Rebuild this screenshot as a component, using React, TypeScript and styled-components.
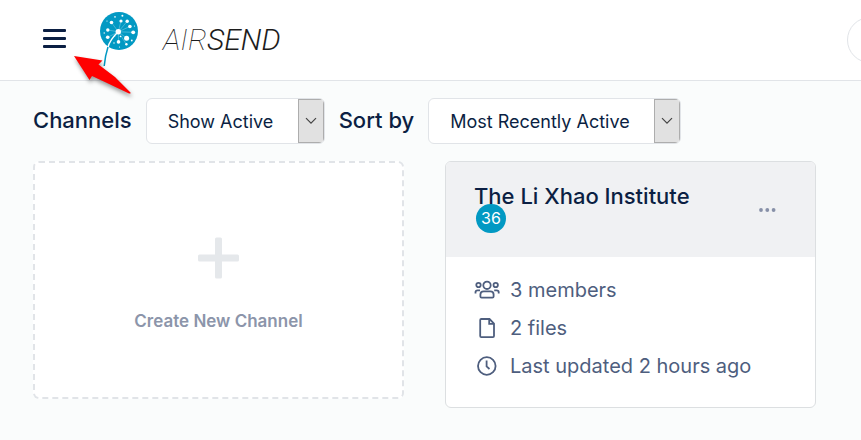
import React from "react";
import styled, { createGlobalStyle } from "styled-components";

const navy = "#0b1f43";
const slate = "#4e5e7e";
const line = "#e1e4e8";
const teal = "#0299c3";

const GlobalStyle = createGlobalStyle`
  * { box-sizing: border-box; }
  body {
    margin: 0;
    background: #fafcfc;
    color: ${navy};
    font-family: Inter, "Liberation Sans", sans-serif;
    overflow-x: hidden;
  }
  button, select { font: inherit; color: inherit; }
`;

const Header = styled.header`
  position: relative;
  display: flex;
  align-items: center;
  height: 81px;
  padding: 0 0 0 40px;
  background: #fff;
  border-bottom: 1px solid ${line};
`;

const MenuButton = styled.button`
  display: flex;
  padding: 0;
  border: 0;
  background: none;
  cursor: pointer;
`;

const Brand = styled.a`
  display: flex;
  align-items: center;
  gap: 23px;
  margin-left: 30px;
  color: #1c1c1c;
  text-decoration: none;
`;

const Wordmark = styled.span<{ $weight: number }>`
  font-family: Roboto, "Liberation Sans", sans-serif;
  font-size: 30px;
  line-height: 36px;
  font-style: italic;
  font-weight: ${(p) => p.$weight};
`;

const Avatar = styled.button`
  flex: none;
  width: 46px;
  height: 46px;
  margin: 0 -32px 0 auto;
  border: 1px solid ${line};
  border-radius: 50%;
  background: #fff;
`;

const Pointer = styled.svg`
  position: absolute;
  top: 50px;
  left: 68px;
  z-index: 1;
  overflow: visible;
  pointer-events: none;
  filter: drop-shadow(1px 3px 2px rgba(0, 0, 0, 0.4));
`;

const Main = styled.main`
  padding: 17px 45px 32px 33px;
`;

const Filters = styled.form`
  display: flex;
  align-items: center;
  gap: 14px;
`;

const FilterLabel = styled.label`
  padding-bottom: 2px;
  font-size: 22px;
  line-height: 28px;
  font-weight: 500;
  white-space: nowrap;
`;

const SelectBox = styled.div`
  display: flex;
  height: 46px;
  border: 1px solid ${line};
  border-radius: 6px;
  background: #fff;
  overflow: hidden;
`;

const Select = styled.select`
  appearance: none;
  border: 0;
  outline: 0;
  margin: 0 -26px 0 0;
  padding: 0 50px 0 21px;
  background: none;
  font-size: 18px;
  z-index: 1;
`;

const SelectArrow = styled.span`
  display: flex;
  align-items: center;
  justify-content: center;
  width: 26px;
  border: 1px solid #adadad;
  background: #e1e1e1;
`;

const Cards = styled.section`
  display: grid;
  grid-template-columns: repeat(2, 1fr);
  align-items: start;
  gap: 41px;
  margin-top: 17px;
`;

const CreateCard = styled.button`
  display: flex;
  flex-direction: column;
  align-items: center;
  gap: 30px;
  padding: 74px 20px 64px;
  border: 2px dashed ${line};
  border-radius: 6px;
  background: #fff;
  color: #8c95aa;
  font-size: 17px;
  line-height: 24px;
  font-weight: 600;
  cursor: pointer;
`;

const Card = styled.article`
  border: 1px solid #dcdfe1;
  border-radius: 6px;
  background: #fff;
  overflow: hidden;
`;

const CardHead = styled.div`
  display: flex;
  align-items: center;
  justify-content: space-between;
  height: 95px;
  padding: 0 37px 0 28px;
  background: #f0f1f3;
`;

const TitleBlock = styled.div`
  position: relative;
  height: 56px;
`;

const Title = styled.h2`
  margin: 0;
  font-size: 22px;
  line-height: 28px;
  font-weight: 500;
`;

const Badge = styled.span`
  position: absolute;
  top: 22px;
  left: 2px;
  width: 30px;
  border-radius: 15px;
  background: ${teal};
  color: #fff;
  font-size: 16px;
  line-height: 29px;
  text-align: center;
`;

const MoreButton = styled.button`
  display: flex;
  padding: 8px 2px;
  border: 0;
  background: none;
  cursor: pointer;
`;

const Facts = styled.ul`
  display: flex;
  flex-direction: column;
  gap: 10px;
  margin: 0;
  padding: 19px 28px 27px;
  list-style: none;
`;

const Fact = styled.li`
  display: flex;
  align-items: center;
  gap: 10px;
  color: ${slate};
  font-size: 20px;
  line-height: 28px;
`;

const MenuIcon = () => (
  <svg width="30" height="24" viewBox="0 0 30 24" fill={navy} aria-hidden="true">
    <rect x="3" y="1" width="23" height="3" rx="1" />
    <rect x="3" y="9" width="23" height="3" rx="1" />
    <rect x="3" y="17" width="23" height="3" rx="1" />
  </svg>
);

const seeds = [
  [11.5, 10.5, 1.8], [21, 9, 1.6], [27.2, 9.3, 1.7], [29.9, 14.5, 1.8],
  [33.2, 20.3, 1.9], [26.6, 26.2, 2.5], [18.5, 29.9, 1.8], [7.7, 25.3, 1.8],
  [7.8, 18, 1.7], [26.4, 32.3, 1.2], [15, 4.9, 0.8], [22.4, 3.8, 1],
  [4.2, 21, 0.7], [14, 31, 0.7], [34.5, 14, 0.6], [20.5, 24.5, 0.8],
  [31.8, 28.5, 0.9], [7, 9, 0.6], [14.8, 24, 0.5], [19.5, 35, 0.6],
];

const Dandelion = () => (
  <svg width="40" height="56" viewBox="0 0 40 56" aria-hidden="true">
    <circle cx="19" cy="19" r="19" fill={teal} />
    <g stroke="#fff" strokeOpacity="0.45" strokeWidth="0.6">
      {seeds.slice(0, 10).map(([x, y]) => (
        <path key={`${x}-${y}`} d={`M18.3 19.8L${x} ${y}`} />
      ))}
    </g>
    <g fill="#fff">
      {seeds.map(([x, y, r]) => <circle key={`${x}-${y}`} cx={x} cy={y} r={r} />)}
      <circle cx="18.3" cy="19.8" r="2.7" />
    </g>
    <path d="M18 20C11.5 26 9 31 7.7 36" fill="none" stroke="#fff" strokeWidth="1.4" />
    <path d="M8 35C6 41 5 46 4.2 54" fill="none" stroke={teal} strokeWidth="1.5" />
  </svg>
);

const RedArrow = () => (
  <Pointer width="64" height="46" viewBox="0 0 64 46" aria-hidden="true">
    <path d="M6 6L34.5 10.5L30.5 14.5L47 27L62.5 42.5V43.5H61L39 33L24 26L21.5 30Z" fill="#fe0000" />
  </Pointer>
);

const Chevron = () => (
  <svg width="12" height="8" viewBox="0 0 12 8" fill="none" stroke="#444" strokeWidth="1.2" aria-hidden="true">
    <path d="M1 1.2L6 6.2L11 1.2" />
  </svg>
);

const PlusIcon = () => (
  <svg width="42" height="42" viewBox="0 0 42 42" fill="#e5e8eb" aria-hidden="true">
    <rect x="0" y="17.5" width="41" height="7" rx="1.5" />
    <rect x="17" y="0.5" width="7" height="41" rx="1.5" />
  </svg>
);

const DotsIcon = () => (
  <svg width="17" height="4" viewBox="0 0 17 4" fill="#8790a8" aria-hidden="true">
    <circle cx="2" cy="2" r="1.9" />
    <circle cx="8.3" cy="2" r="1.9" />
    <circle cx="14.6" cy="2" r="1.9" />
  </svg>
);

const FactIcon = ({ children }: { children: React.ReactNode }) => (
  <svg width="26" height="22" viewBox="0 0 26 22" fill="none" stroke={slate} strokeWidth="1.8" aria-hidden="true">
    {children}
  </svg>
);

const facts = [
  {
    text: "3 members",
    icon: (
      <FactIcon>
        <circle cx="13" cy="6.3" r="3.7" />
        <circle cx="4.5" cy="6" r="2.2" />
        <circle cx="21.7" cy="6" r="2.2" />
        <path d="M9.7 12.4H16.3Q19.6 12.4 19.6 15.4V17.4Q19.6 18.6 18.4 18.6H7.6Q6.4 18.6 6.4 17.4V15.4Q6.4 12.4 9.7 12.4Z" />
        <path d="M1.5 14.5V13.2Q1.5 11.3 3.6 11.3H6M24.7 14.5V13.2Q24.7 11.3 22.6 11.3H20.2" />
      </FactIcon>
    ),
  },
  {
    text: "2 files",
    icon: (
      <FactIcon>
        <path d="M7.3 2H15.5L20 6.5V19Q20 20.1 18.9 20.1H7.3Q6.2 20.1 6.2 19V3Q6.2 2 7.3 2Z" />
        <path d="M15.2 2V6.8H20" />
      </FactIcon>
    ),
  },
  {
    text: "Last updated 2 hours ago",
    icon: (
      <FactIcon>
        <circle cx="12.8" cy="11" r="8.8" />
        <path d="M12.6 5.6V11.4L15.5 14" />
      </FactIcon>
    ),
  },
];

const Filter = ({ id, label, value }: { id: string; label: string; value: string }) => (
  <>
    <FilterLabel htmlFor={id}>{label}</FilterLabel>
    <SelectBox>
      <Select id={id}>
        <option>{value}</option>
      </Select>
      <SelectArrow><Chevron /></SelectArrow>
    </SelectBox>
  </>
);

export default function App() {
  return (
    <>
      <GlobalStyle />
      <Header>
        <MenuButton aria-label="Menu"><MenuIcon /></MenuButton>
        <Brand href="#">
          <Dandelion />
          <span>
            <Wordmark $weight={100}>AIR</Wordmark>
            <Wordmark $weight={300}>SEND</Wordmark>
          </span>
        </Brand>
        <Avatar aria-label="Account" />
        <RedArrow />
      </Header>
      <Main>
        <Filters>
          <Filter id="show" label="Channels" value="Show Active" />
          <Filter id="sort" label="Sort by" value="Most Recently Active" />
        </Filters>
        <Cards>
          <CreateCard>
            <PlusIcon />
            Create New Channel
          </CreateCard>
          <Card>
            <CardHead>
              <TitleBlock>
                <Title>The Li Xhao Institute</Title>
                <Badge>36</Badge>
              </TitleBlock>
              <MoreButton aria-label="More options"><DotsIcon /></MoreButton>
            </CardHead>
            <Facts>
              {facts.map((f) => (
                <Fact key={f.text}>{f.icon}{f.text}</Fact>
              ))}
            </Facts>
          </Card>
        </Cards>
      </Main>
    </>
  );
}
